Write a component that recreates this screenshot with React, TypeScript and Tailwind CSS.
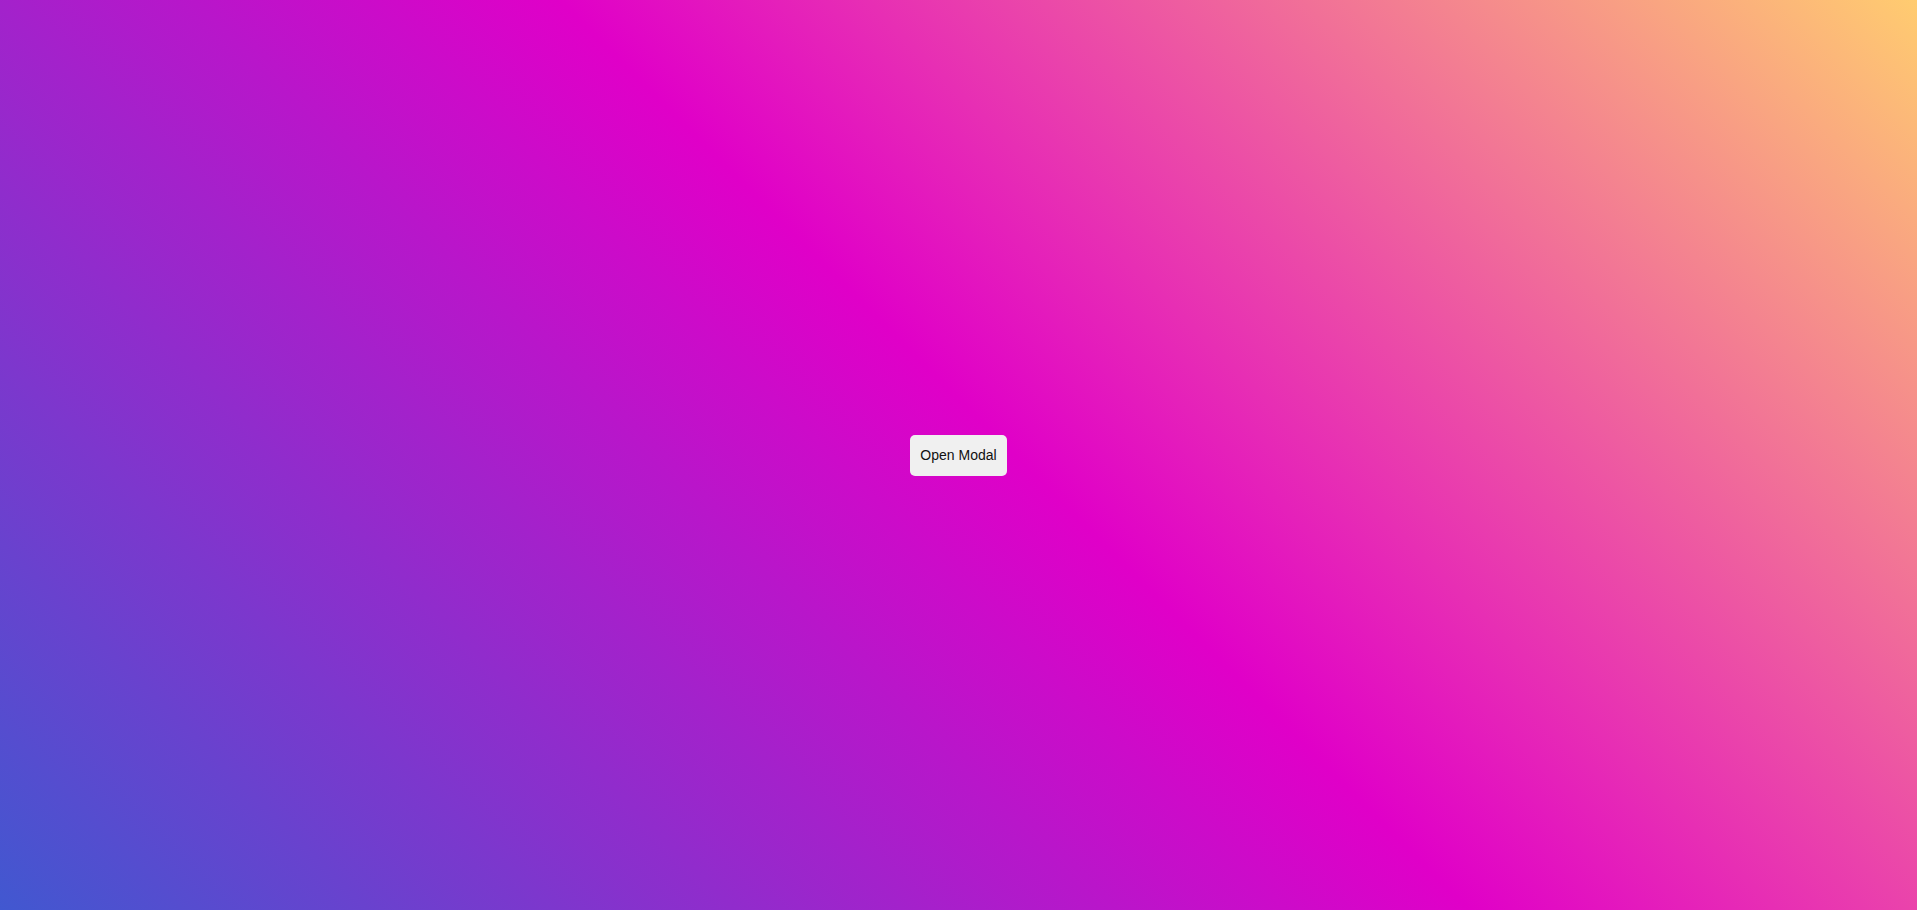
export default function App() {
  return (
    <div className="flex h-screen w-full items-center justify-center bg-[linear-gradient(45deg,#4158D0_0%,#E000C8_52%,#FFCC70_100%)]">
      <button className="rounded-[5px] bg-[#f0f0f0] px-[10px] py-3 font-['Liberation_Sans',Arial,sans-serif] text-[14px] leading-[17px] text-[#111]">
        Open Modal
      </button>
    </div>
  );
}
